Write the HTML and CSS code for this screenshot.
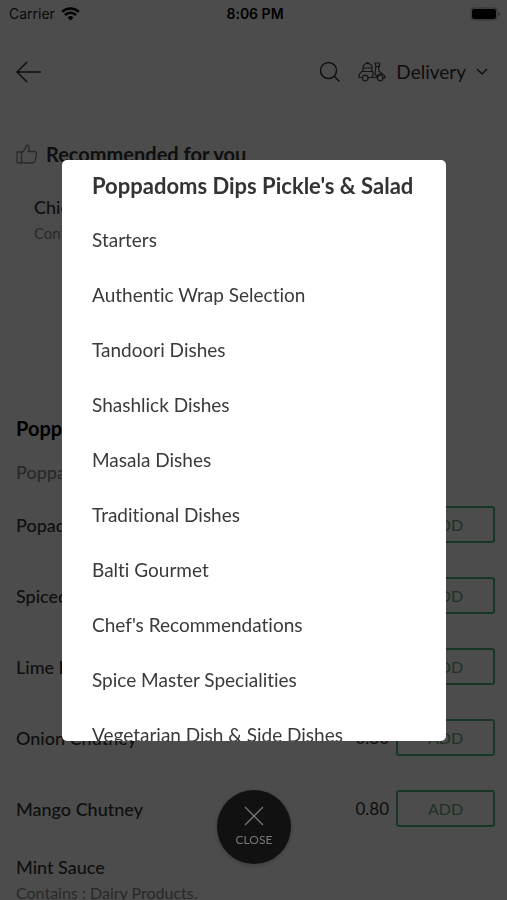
FILE: index.html
```html
<!DOCTYPE html>
<html lang="en">
<head>
<meta charset="utf-8">
<meta name="viewport" content="width=device-width, initial-scale=1">
<title>Menu</title>
<link rel="stylesheet" href="styles.css">
</head>
<body>
<div class="page">
  <div class="status">
    <div class="carrier">Carrier
      <svg width="19" height="14" viewBox="0 0 19 14"><path d="M9.500 13.500 6.600 10.400a4.200 4.200 0 0 1 5.800 0z"/><path class="arc" d="M4 8a7.900 7.900 0 0 1 11 0M1.200 4.900a12 12 0 0 1 16.600 0"/></svg>
    </div>
    <div class="time">8:06 PM</div>
    <svg class="battery" width="31" height="14" viewBox="0 0 31 14"><rect class="shell" x="1" y="1" width="26" height="12" rx="3"/><rect x="2" y="2" width="24" height="10" rx="2"/><path class="tip" d="M28.500 5v4q1.500-.5 1.500-2t-1.500-2z"/></svg>
  </div>
  <header class="bar">
    <button class="icon-button" aria-label="Back"><svg class="line" width="26" height="22" viewBox="0 0 26 22"><path d="M11 1 1 11l10 10M1 11h24"/></svg></button>
    <div class="actions">
      <button class="icon-button" aria-label="Search"><svg class="line" width="22" height="22" viewBox="0 0 22 22"><circle cx="9.500" cy="9.500" r="8"/><path d="m15.500 15.500 5 5"/></svg></button>
      <button class="mode">
        <svg class="scooter" width="28" height="20" viewBox="0 0 28 20"><path d="M5 9.500V6q0-4.500 4.500-4.500T14 6v3.500M4 9.500h11M5 6h9M7.500 1.800 9.500.500l2 1.300M4 9.500Q1 11 1 15.500h3.500M15 9.500v4l-1.500 2h5.500M10 15.500h3.500M17 1h4.500v3.500H18zM20.500 4.500l.5 4.500 3.500 3q2.500 1 2.500 4h-2M17.800 4.500 17 12l2 2.500q1-3 5.500-2.500"/><circle cx="7.200" cy="16" r="2.800"/><circle cx="22.200" cy="16" r="2.800"/></svg>
        <span>Delivery</span>
        <svg class="line" width="12" height="8" viewBox="0 0 12 8"><path d="m1 1 5 5 5-5"/></svg>
      </button>
    </div>
  </header>
  <main>
    <h2 class="recommended"><svg class="thumb" width="22" height="20" viewBox="0 0 22 20"><path d="M1 8h4.500v11H2.500Q1 19 1 17.500zM5.500 9l4-4.500L10 1.500q2-1.200 3 1 .8 2-.8 5h6.300q2.300.2 2 2.500L19 17q-.6 2-2.500 2H9q-2 0-3.500-1.500"/></svg>Recommended for you</h2>
    <article class="card">
      <h3>Chicken Tikka</h3>
      <p>Contains : Dairy</p>
    </article>
    <h2 class="section">Poppadoms Dips Pickle's &amp; Salad</h2>
    <p class="intro">Poppadoms Dips Pickle's &amp; Salad</p>
    <ul class="items">
      <li><span class="name">Popadom</span><span class="price">0.80</span><button class="add">ADD</button></li>
      <li><span class="name">Spiced Popadom</span><span class="price">0.80</span><button class="add">ADD</button></li>
      <li><span class="name">Lime Pickle</span><span class="price">0.80</span><button class="add">ADD</button></li>
      <li><span class="name">Onion Chutney</span><span class="price">0.80</span><button class="add">ADD</button></li>
      <li><span class="name">Mango Chutney</span><span class="price">0.80</span><button class="add">ADD</button></li>
    </ul>
    <div class="mint"><h3>Mint Sauce</h3><p>Contains : Dairy Products.</p></div>
  </main>
</div>
<div class="overlay">
  <nav class="menu" aria-label="Menu sections">
    <a class="current" href="#">Poppadoms Dips Pickle's &amp; Salad</a>
    <a href="#">Starters</a>
    <a href="#">Authentic Wrap Selection</a>
    <a href="#">Tandoori Dishes</a>
    <a href="#">Shashlick Dishes</a>
    <a href="#">Masala Dishes</a>
    <a href="#">Traditional Dishes</a>
    <a href="#">Balti Gourmet</a>
    <a href="#">Chef's Recommendations</a>
    <a href="#">Spice Master Specialities</a>
    <a href="#">Vegetarian Dish &amp; Side Dishes</a>
  </nav>
  <button class="close"><svg width="20" height="20" viewBox="0 0 20 20"><path d="m1 1 18 18M19 1 1 19"/></svg>CLOSE</button>
</div>
</body>
</html>
```
FILE: styles.css
```css
* { box-sizing: border-box; }
html, body { height: 100%; }
body {
  margin: 0;
  font-family: Lato, "Liberation Sans", sans-serif;
  font-size: 18px;
  font-variant-ligatures: none;
  line-height: 24px;
  color: #333;
}
h2, h3, p, ul { margin: 0; padding: 0; }
svg { display: block; flex: none; }
button {
  font: inherit;
  color: inherit;
  background: none;
  border: 0;
  padding: 0;
}
.page { height: 100vh; overflow: hidden; background: #fff; }

.status {
  display: grid;
  grid-template-columns: 1fr auto 1fr;
  align-items: center;
  height: 28px;
  padding: 0 6px 0 9px;
  font-family: Inter, sans-serif;
  font-size: 14px;
  color: #222;
}
.carrier { display: flex; align-items: center; gap: 6px; }
.carrier svg { fill: #000; }
.carrier .arc { fill: none; stroke: #000; stroke-width: 2.5; }
.time { font-weight: 600; color: #000; }
.battery { justify-self: end; }
.shell { fill: none; stroke: #aaa; }
.tip { fill: #888; }

.bar {
  display: flex;
  align-items: center;
  justify-content: space-between;
  height: 88px;
  padding: 0 19px 0 16px;
}
.line { fill: none; stroke: #333; stroke-width: 1.5; }
.actions { display: flex; align-items: center; gap: 17px; }
.mode { display: flex; align-items: center; gap: 10px; font-size: 19px; }
.scooter { fill: none; stroke: #444; stroke-width: 1.2; }

main { padding: 26px 12px 0 16px; }
.recommended {
  display: flex;
  align-items: center;
  gap: 8px;
  font-size: 20px;
  font-weight: 700;
}
.thumb { fill: none; stroke: #888; stroke-width: 1.3; }
.card {
  height: 190px;
  margin-top: 11px;
  padding: 18px;
  background: #fcfcfc;
}
.card h3 { font-size: 18px; font-weight: 500; }
.card p, .mint p { font-size: 16px; color: #888; }
.card p { margin-top: 2px; font-size: 15px; }
.section { margin-top: 49px; font-size: 20px; font-weight: 700; color: #000; }
.intro { margin-top: 20px; font-weight: 500; color: #888; }
.items { margin-top: 5px; list-style: none; }
.items li { display: flex; align-items: center; height: 71px; gap: 7px; }
.name { flex: 1; font-weight: 500; }
.price { font-size: 17px; }
.add {
  width: 99px;
  height: 37px;
  border: 2px solid #52b57c;
  border-radius: 3px;
  font-size: 16px;
  color: #5aa87c;
}
.mint h3 { font-size: 18px; font-weight: 500; margin-top: 11px; }
.mint p { margin-top: 2px; }

.overlay {
  position: fixed;
  inset: 0;
  display: flex;
  flex-direction: column;
  align-items: center;
  gap: 49px;
  padding: 160px 61px 36px 62px;
  background: rgba(0, 0, 0, 0.7);
}
.menu {
  flex: 1;
  min-height: 0;
  width: 100%;
  overflow: hidden;
  border-radius: 5px;
  background: #fff;
}
.menu a {
  display: block;
  padding: 0 30px;
  font-size: 19px;
  line-height: 55px;
  color: #3a3a3a;
  text-decoration: none;
  white-space: nowrap;
}
.menu .current { line-height: 52px; font-size: 22px; font-weight: 700; color: #333; }
.close {
  display: flex;
  flex-direction: column;
  align-items: center;
  justify-content: center;
  gap: 5px;
  width: 74px;
  height: 74px;
  flex: none;
  border-radius: 50%;
  background: #111;
  color: #777;
  font-size: 12px;
  line-height: 18px;
  box-shadow: 0 1px 5px rgba(0, 0, 0, 0.25);
}
.close svg { stroke: #777; stroke-width: 1.3; }
```
